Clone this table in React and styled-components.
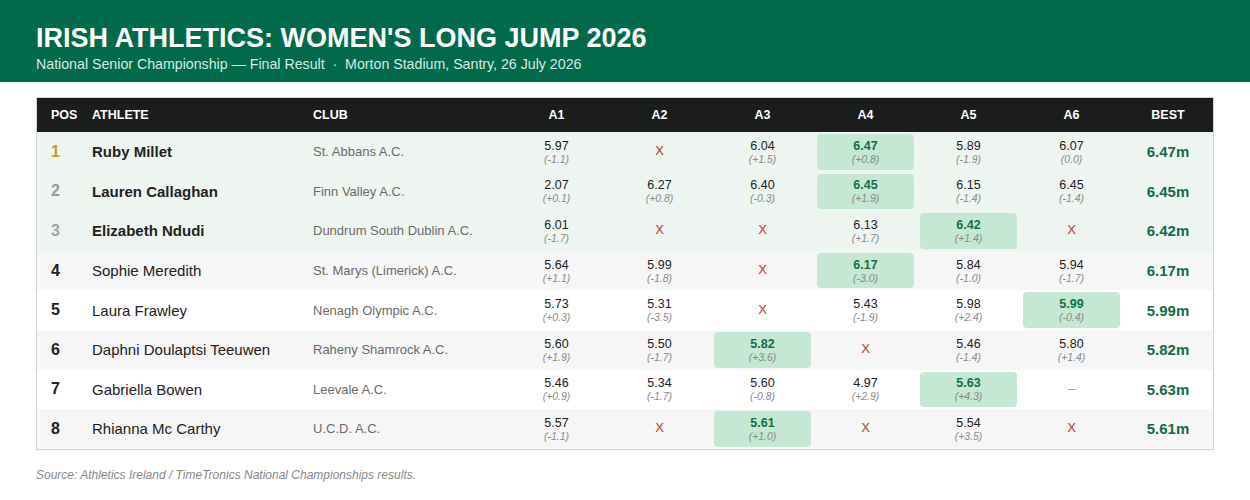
import styled, { createGlobalStyle } from "styled-components";

const GlobalStyle = createGlobalStyle`
  body {
    margin: 0;
    background: #ffffff;
    font-family: "Liberation Sans", Arial, sans-serif;
    color: #222;
  }
`;

const results = [
  {
    pos: 1,
    name: "Ruby Millet",
    club: "St. Abbans A.C.",
    marks: [["5.97", "-1.1"], "X", ["6.04", "+1.5"], ["6.47", "+0.8"], ["5.89", "-1.9"], ["6.07", "0.0"]],
    best: 3,
    result: "6.47m",
  },
  {
    pos: 2,
    name: "Lauren Callaghan",
    club: "Finn Valley A.C.",
    marks: [["2.07", "+0.1"], ["6.27", "+0.8"], ["6.40", "-0.3"], ["6.45", "+1.9"], ["6.15", "-1.4"], ["6.45", "-1.4"]],
    best: 3,
    result: "6.45m",
  },
  {
    pos: 3,
    name: "Elizabeth Ndudi",
    club: "Dundrum South Dublin A.C.",
    marks: [["6.01", "-1.7"], "X", "X", ["6.13", "+1.7"], ["6.42", "+1.4"], "X"],
    best: 4,
    result: "6.42m",
  },
  {
    pos: 4,
    name: "Sophie Meredith",
    club: "St. Marys (Limerick) A.C.",
    marks: [["5.64", "+1.1"], ["5.99", "-1.8"], "X", ["6.17", "-3.0"], ["5.84", "-1.0"], ["5.94", "-1.7"]],
    best: 3,
    result: "6.17m",
  },
  {
    pos: 5,
    name: "Laura Frawley",
    club: "Nenagh Olympic A.C.",
    marks: [["5.73", "+0.3"], ["5.31", "-3.5"], "X", ["5.43", "-1.9"], ["5.98", "+2.4"], ["5.99", "-0.4"]],
    best: 5,
    result: "5.99m",
  },
  {
    pos: 6,
    name: "Daphni Doulaptsi Teeuwen",
    club: "Raheny Shamrock A.C.",
    marks: [["5.60", "+1.9"], ["5.50", "-1.7"], ["5.82", "+3.6"], "X", ["5.46", "-1.4"], ["5.80", "+1.4"]],
    best: 2,
    result: "5.82m",
  },
  {
    pos: 7,
    name: "Gabriella Bowen",
    club: "Leevale A.C.",
    marks: [["5.46", "+0.9"], ["5.34", "-1.7"], ["5.60", "-0.8"], ["4.97", "+2.9"], ["5.63", "+4.3"], "–"],
    best: 4,
    result: "5.63m",
  },
  {
    pos: 8,
    name: "Rhianna Mc Carthy",
    club: "U.C.D. A.C.",
    marks: [["5.57", "-1.1"], "X", ["5.61", "+1.0"], "X", ["5.54", "+3.5"], "X"],
    best: 2,
    result: "5.61m",
  },
];

const posColors = { 1: "#c39a3a", 2: "#9a9a9a", 3: "#a3a3a3" };

const Banner = styled.header`
  background: #006a4a;
  color: #fff;
  padding: 23px 36px 12px;
  height: 47px;
`;

const Title = styled.h1`
  margin: 0;
  font-size: 27px;
  line-height: 31px;
  font-weight: 700;
`;

const Subtitle = styled.p`
  margin: 1px 0 0;
  font-size: 14.2px;
  line-height: 18px;
  color: #d6ebe2;
`;

const Main = styled.main`
  padding: 15px 36px 0;
`;

const Frame = styled.div`
  border: 1px solid #d4d4d4;
  box-shadow: 0 1px 2px rgba(0, 0, 0, 0.06);
`;

const Table = styled.table`
  width: 100%;
  border-collapse: collapse;
  table-layout: fixed;
`;

const HeadCell = styled.th`
  box-sizing: border-box;
  background: #1b1d1c;
  color: #fff;
  font-size: 12.5px;
  font-weight: 700;
  height: 34px;
  padding: 0 ${(p) => (p.$align === "center" ? "0" : "14px")};
  text-align: ${(p) => p.$align || "left"};
  width: ${(p) => (p.$w ? `${p.$w}px` : "auto")};
`;

const Row = styled.tr`
  background: ${(p) => (p.$podium ? "#eef5f0" : p.$even ? "#f6f6f6" : "#ffffff")};
`;

const Cell = styled.td`
  height: 39.6px;
  padding: 0 14px;
  vertical-align: middle;
  white-space: nowrap;
`;

const PosCell = styled(Cell)`
  font-size: 16px;
  font-weight: 700;
  color: ${(p) => posColors[p.$pos] || "#222"};
`;

const NameCell = styled(Cell)`
  font-size: 15px;
  font-weight: ${(p) => (p.$bold ? 700 : 400)};
  color: #222;
`;

const ClubCell = styled(Cell)`
  font-size: 13px;
  color: #6b6b6b;
`;

const MarkCell = styled.td`
  padding: 2px 3px;
  text-align: center;
  vertical-align: middle;
`;

const MarkBox = styled.div`
  height: 35.6px;
  border-radius: 4px;
  background: ${(p) => (p.$best ? "#c6e7d3" : "transparent")};
  display: flex;
  flex-direction: column;
  align-items: center;
  justify-content: center;
`;

const Distance = styled.span`
  font-size: 12.5px;
  line-height: 14px;
  font-weight: ${(p) => (p.$best ? 700 : 400)};
  color: ${(p) => (p.$best ? "#13704a" : "#222")};
`;

const Wind = styled.span`
  font-size: 10.5px;
  line-height: 12px;
  font-style: italic;
  color: #8a8a8a;
`;

const Foul = styled.span`
  font-size: 13px;
  color: ${(p) => (p.$pass ? "#9a9a9a" : "#c0392b")};
  margin-top: -2px;
`;

const BestCell = styled.td`
  text-align: center;
  vertical-align: middle;
  font-size: 15px;
  font-weight: 700;
  color: #16694a;
`;

const Source = styled.p`
  margin: 18px 0 0;
  font-size: 12px;
  font-style: italic;
  color: #888;
`;

const Mark = ({ mark, best }) => {
  if (typeof mark === "string") {
    return (
      <MarkBox>
        <Foul $pass={mark !== "X"}>{mark}</Foul>
      </MarkBox>
    );
  }
  return (
    <MarkBox $best={best}>
      <Distance $best={best}>{mark[0]}</Distance>
      <Wind>({mark[1]})</Wind>
    </MarkBox>
  );
};

const App = () => {
  return (
    <>
      <GlobalStyle />
      <Banner>
        <Title>IRISH ATHLETICS: WOMEN'S LONG JUMP 2026</Title>
        <Subtitle>
          National Senior Championship — Final Result &nbsp;·&nbsp; Morton Stadium, Santry, 26 July 2026
        </Subtitle>
      </Banner>
      <Main>
        <Frame>
          <Table>
            <thead>
              <tr>
                <HeadCell $w={41}>POS</HeadCell>
                <HeadCell $w={221}>ATHLETE</HeadCell>
                <HeadCell $w={206}>CLUB</HeadCell>
                {["A1", "A2", "A3", "A4", "A5", "A6"].map((a) => (
                  <HeadCell key={a} $w={103} $align="center">
                    {a}
                  </HeadCell>
                ))}
                <HeadCell $align="center">BEST</HeadCell>
              </tr>
            </thead>
            <tbody>
              {results.map((r, i) => (
                <Row key={r.pos} $podium={r.pos <= 3} $even={i % 2 === 1}>
                  <PosCell $pos={r.pos}>{r.pos}</PosCell>
                  <NameCell $bold={r.pos <= 3}>{r.name}</NameCell>
                  <ClubCell>{r.club}</ClubCell>
                  {r.marks.map((m, j) => (
                    <MarkCell key={j}>
                      <Mark mark={m} best={j === r.best} />
                    </MarkCell>
                  ))}
                  <BestCell>{r.result}</BestCell>
                </Row>
              ))}
            </tbody>
          </Table>
        </Frame>
        <Source>Source: Athletics Ireland / TimeTronics National Championships results.</Source>
      </Main>
    </>
  );
};

export default App;
